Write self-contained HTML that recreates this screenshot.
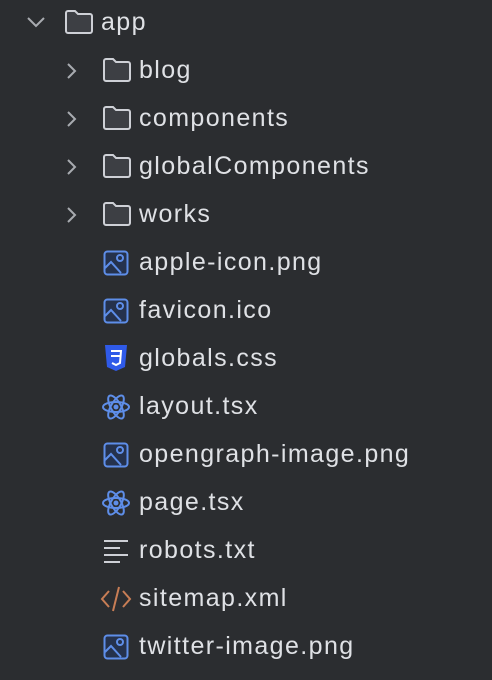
<!DOCTYPE html>
<html><head><style>
body{margin:0;background:#2b2d30;width:492px;height:680px;overflow:hidden;font-family:"Liberation Sans",sans-serif;}
.r{position:absolute;left:0;height:48px;width:492px;}
.t{position:absolute;top:50%;transform:translateY(-52%);color:#dfe1e5;font-size:25px;letter-spacing:1.4px;white-space:nowrap;}
svg{position:absolute;}
</style></head><body>
<div class="r" style="top:-1px">
<svg style="left:26px;top:16px" width="20" height="14" viewBox="0 0 20 14"><path d="M2 3l8 8 8-8" fill="none" stroke="#a8abb0" stroke-width="2"/></svg>
<svg style="left:64px;top:10px" width="30" height="26" viewBox="0 0 30 26"><path d="M2 4a2 2 0 0 1 2-2h7l3 3h12a2 2 0 0 1 2 2v15a2 2 0 0 1-2 2H4a2 2 0 0 1-2-2z" fill="#3d3f44" stroke="#ced0d6" stroke-width="2"/></svg>
<span class="t" style="left:101px">app</span></div>
<div id="rows"></div>
<script>
var folder='<svg style="left:102px;top:10px" width="30" height="26" viewBox="0 0 30 26"><path d="M2 4a2 2 0 0 1 2-2h7l3 3h12a2 2 0 0 1 2 2v15a2 2 0 0 1-2 2H4a2 2 0 0 1-2-2z" fill="#3d3f44" stroke="#ced0d6" stroke-width="2"/></svg>';
var chev='<svg style="left:66px;top:15px" width="12" height="18" viewBox="0 0 12 18"><path d="M2 2l7 7-7 7" fill="none" stroke="#a8abb0" stroke-width="2"/></svg>';
var img='<svg style="left:103px;top:11px" width="26" height="26" viewBox="0 0 26 26"><rect x="1.5" y="1.5" width="23" height="23" rx="3" fill="#25324d" stroke="#5e8ee9" stroke-width="2"/><path d="M2 18l6-6 10 11" fill="none" stroke="#5e8ee9" stroke-width="2"/><circle cx="17" cy="8" r="3" fill="none" stroke="#5e8ee9" stroke-width="2"/></svg>';
var css='<svg style="left:104px;top:9px" width="24" height="28" viewBox="0 0 24 28"><path d="M1 1h22l-2 22-9 4-9-4z" fill="#2f5ae8"/><path d="M7 7h10l-1 12-4 2-4-2M7 12h9" fill="none" stroke="#fff" stroke-width="2"/></svg>';
var react='<svg style="left:101px;top:10px" width="30" height="28" viewBox="0 0 30 28"><g fill="none" stroke="#5e8ee9" stroke-width="2"><ellipse cx="15" cy="14" rx="13" ry="5"/><ellipse cx="15" cy="14" rx="13" ry="5" transform="rotate(60 15 14)"/><ellipse cx="15" cy="14" rx="13" ry="5" transform="rotate(-60 15 14)"/></g><circle cx="15" cy="14" r="2.5" fill="#5e8ee9"/></svg>';
var txt='<svg style="left:103px;top:12px" width="26" height="24" viewBox="0 0 26 24"><path d="M1 2h24M1 9h16M1 16h24M1 23h16" stroke="#ced0d6" stroke-width="2"/></svg>';
var xml='<svg style="left:100px;top:11px" width="32" height="26" viewBox="0 0 32 26"><path d="M9 5l-7 8 7 8M23 5l7 8-7 8M19 1l-6 24" fill="none" stroke="#c77d55" stroke-width="2"/></svg>';
var items=[['blog',chev+folder],['components',chev+folder],['globalComponents',chev+folder],['works',chev+folder],['apple-icon.png',img],['favicon.ico',img],['globals.css',css],['layout.tsx',react],['opengraph-image.png',img],['page.tsx',react],['robots.txt',txt],['sitemap.xml',xml],['twitter-image.png',img]];
var h='';items.forEach(function(it,i){h+='<div class="r" style="top:'+(47+48*i)+'px">'+it[1]+'<span class="t" style="left:139px">'+it[0]+'</span></div>';});
document.getElementById('rows').innerHTML=h;
</script>
</body></html>
